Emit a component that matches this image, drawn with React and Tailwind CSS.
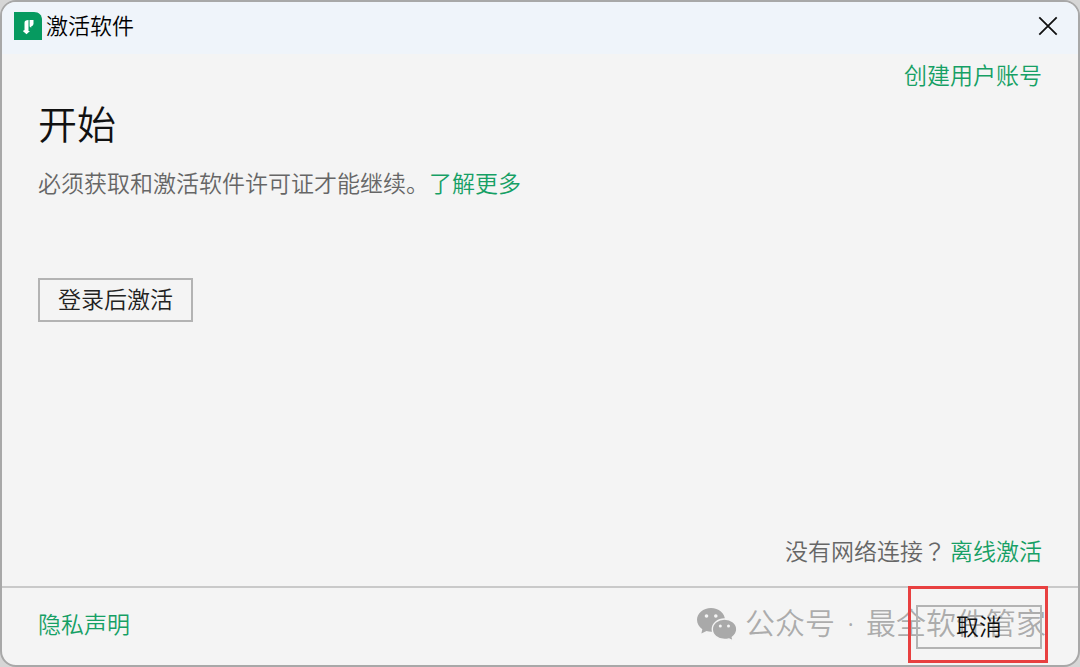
import React from 'react'

const LogoIcon = () => (
  <svg className="w-7 h-7 shrink-0" viewBox="0 0 28 28" aria-hidden="true">
    <path d="M0 0H20C25 0 28 3 28 8V28H0Z" fill="#069a60" />
    <path d="M10.500 10.800Q10.500 8 14.500 8V19H16L12.500 22.300L8.800 19L10.500 18Z" fill="#fff" />
    <path d="M15.600 8H17.200V15.800L15.600 14.500ZM17.200 8H19.500V12Q19.300 13.800 17.200 14.500Z" fill="#fff" />
  </svg>
)

const CloseIcon = () => (
  <svg className="w-5 h-5" viewBox="0 0 20 20" fill="none" stroke="#111" strokeWidth="1.8" aria-hidden="true">
    <path d="M1.3 1.3L18.7 18.7M18.7 1.3L1.3 18.7" />
  </svg>
)

const WechatIcon = () => (
  <svg className="w-10 h-8 shrink-0 overflow-visible" viewBox="0 0 40 32" aria-hidden="true">
    <path
      d="M14 0C6.300 0 0 5.200 0 11.800C0 15.600 2 18.900 5.300 21.200L4.400 25.500L9.500 23Q11.700 23.700 14.500 23.700C22 23.700 28 18.500 28 11.800C28 5.200 21.700 0 14 0Z"
      fill="#a9a9a9"
    />
    <path
      d="M27.500 11C20.700 11 15.300 15.600 15.300 21.300C15.300 27 20.700 31.500 27.500 31.500Q30 31.500 32 30.900L36.200 33L35.300 29.200C38 27.300 39.800 24.500 39.800 21.300C39.800 15.600 34.300 11 27.500 11Z"
      fill="#a9a9a9"
      stroke="#f4f4f4"
      strokeWidth="1.4"
    />
    <circle cx="9.500" cy="8" r="1.800" fill="#f4f4f4" />
    <circle cx="18.800" cy="8" r="1.800" fill="#f4f4f4" />
    <circle cx="23.300" cy="18" r="1.500" fill="#f4f4f4" />
    <circle cx="31.500" cy="18" r="1.500" fill="#f4f4f4" />
  </svg>
)

const App = () => {
  return (
    <div className="relative min-h-screen flex bg-[#d6d6d6] font-['Noto_Sans_CJK_SC',sans-serif] font-[350] text-[23px] leading-8 text-[#666]">
      <div className="flex-1 flex flex-col overflow-hidden rounded-2xl border-2 border-[#a8a8a8] bg-[#f4f4f4]">
        {/* 标题栏 */}
        <header className="flex h-13 items-center justify-between bg-[#eff4fa] pl-3 pr-5 pb-1">
          <div className="flex items-center gap-1">
            <LogoIcon />
            <h1 className="pb-1 text-[22px] text-black">激活软件</h1>
          </div>
          <button type="button" aria-label="关闭">
            <CloseIcon />
          </button>
        </header>

        {/* 内容 */}
        <main className="flex flex-1 flex-col px-9 pt-1 pb-5">
          <a href="#account" className="self-end text-[#16a065]">创建用户账号</a>
          <h2 className="mt-1 text-[39px] leading-14 text-[#111]">开始</h2>
          <p className="mt-4">
            必须获取和激活软件许可证才能继续。
            <a href="#more" className="text-[#16a065]">了解更多</a>
          </p>
          <button
            type="button"
            className="mt-20 h-11 self-start border-2 border-[#b3b3b3] px-[18px] pb-1 text-[#222]"
          >
            登录后激活
          </button>
          <p className="mt-auto self-end">
            没有网络连接
            <span className="font-['Noto_Sans_CJK_TC',sans-serif]">？</span>
            <a href="#offline" className="ml-1 text-[#16a065]">离线激活</a>
          </p>
        </main>

        {/* 底部 */}
        <footer className="flex h-[79px] items-center justify-between border-t-2 border-[#c9c9c9] px-9">
          <a href="#privacy" className="pb-2 text-[#16a065]">隐私声明</a>
          <button type="button" className="relative z-10 h-11 w-[126px] border-2 border-[#b3b3b3] pb-1 text-[#111]">
            取消
          </button>
        </footer>
      </div>

      {/* 水印 */}
      <div className="pointer-events-none absolute right-[34px] bottom-[22px] flex items-center gap-2 text-[30px] leading-9 text-[#8c8c8c]/70">
        <WechatIcon />
        <span className="pb-1 whitespace-pre">
          公众号<span className="mx-1 font-['Noto_Sans',sans-serif]"> · </span>最全软件管家
        </span>
      </div>

      {/* 红色标记框 */}
      <div className="pointer-events-none absolute right-8 bottom-1 h-[77px] w-[140px] border-3 border-[#e84040]" />
    </div>
  )
}

export default App
